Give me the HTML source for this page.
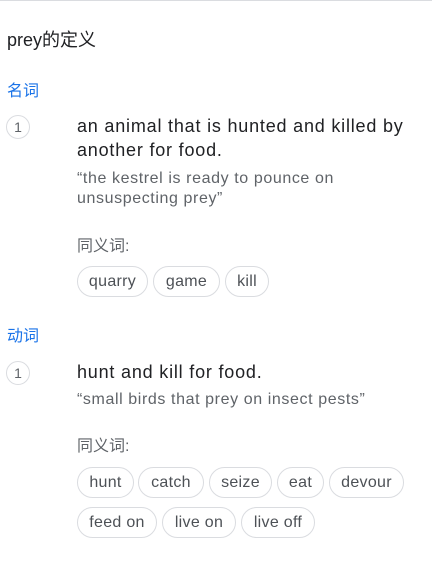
<html><head><style>
body{margin:0;width:432px;height:561px;background:#fff;font-family:"Liberation Sans","Noto Sans CJK SC",sans-serif;position:relative;overflow:hidden}
.a{position:absolute;white-space:nowrap}
.top{position:absolute;left:0;top:0;width:432px;height:1px;background:#dadce0}
.t{font-size:18px;color:#202124}
.pos{font-size:16px;color:#1a73e8}
.n{position:absolute;width:22px;height:22px;border:1px solid #dadce0;border-radius:50%;font-size:14px;color:#5f6368;text-align:center;line-height:22px}
.d{font-size:18px;color:#202124;line-height:24px;letter-spacing:0.8px}
.e{font-size:16px;color:#5f6368;line-height:20px;letter-spacing:0.6px}
.s{font-size:16px;color:#5f6368}
.c{position:absolute;height:29px;border:1px solid #dadce0;border-radius:16px;font-size:16px;color:#4d5156;line-height:29px;text-align:center;box-sizing:content-box;letter-spacing:0.3px}
</style></head><body>
<div class="top"></div>
<div class="a t" style="left:7px;top:26px">prey的定义</div>
<div class="a pos" style="left:7px;top:77px">名词</div>
<div class="n" style="left:6px;top:115px">1</div>
<div class="a d" style="left:77px;top:114px">an animal that is hunted and killed by<br>another for food.</div>
<div class="a e" style="left:77px;top:169px">“the kestrel is ready to pounce on<br>unsuspecting prey”</div>
<div class="a s" style="left:77px;top:232px">同义词:</div>
<div class="c" style="left:77px;top:266px;width:69px">quarry</div>
<div class="c" style="left:153px;top:266px;width:65px">game</div>
<div class="c" style="left:225px;top:266px;width:42px">kill</div>
<div class="a pos" style="left:7px;top:322px">动词</div>
<div class="n" style="left:6px;top:361px">1</div>
<div class="a d" style="left:77px;top:360px">hunt and kill for food.</div>
<div class="a e" style="left:77px;top:390px">“small birds that prey on insect pests”</div>
<div class="a s" style="left:77px;top:432px">同义词:</div>
<div class="c" style="left:77px;top:467px;width:55px">hunt</div>
<div class="c" style="left:138px;top:467px;width:64px">catch</div>
<div class="c" style="left:209px;top:467px;width:61px">seize</div>
<div class="c" style="left:277px;top:467px;width:45px">eat</div>
<div class="c" style="left:329px;top:467px;width:73px">devour</div>
<div class="c" style="left:77px;top:507px;width:78px">feed on</div>
<div class="c" style="left:162px;top:507px;width:72px">live on</div>
<div class="c" style="left:241px;top:507px;width:72px">live off</div>
</body></html>
